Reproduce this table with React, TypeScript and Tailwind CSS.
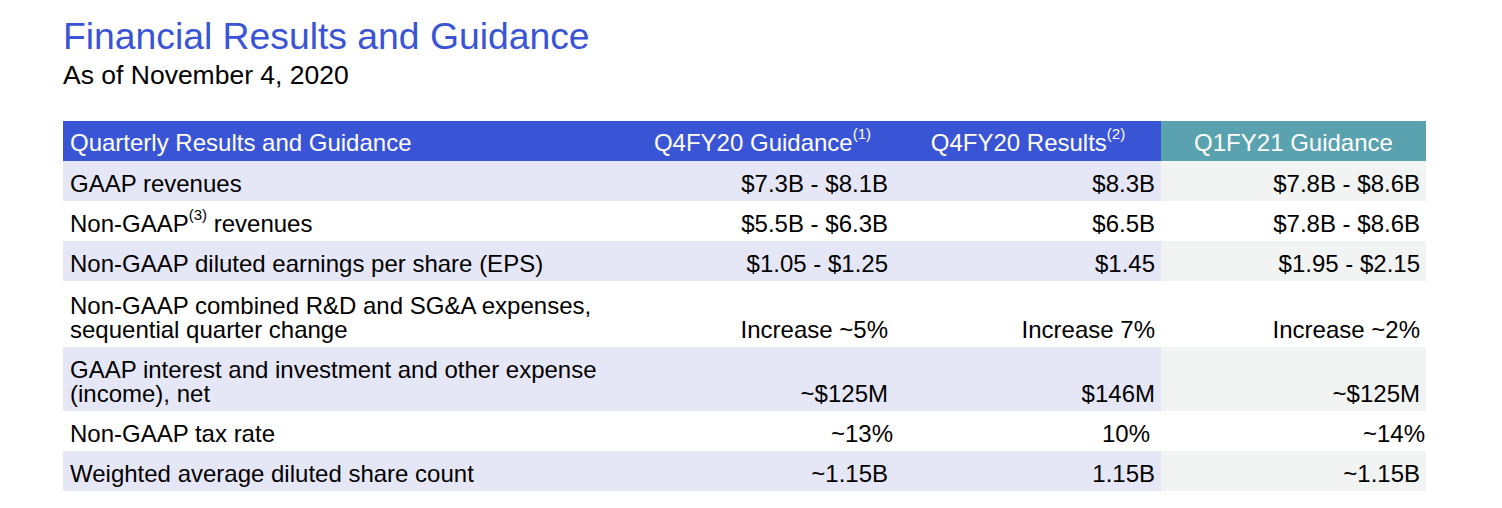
import React from "react";

type Row = {
  label: React.ReactNode;
  vals: [string, string, string];
  h: string;
  shade: boolean;
  pr?: [string, string, string];
};

const Sup = ({ n }: { n: string }) => (
  <sup className="text-[15px] relative top-[-3px] align-super leading-none">({n})</sup>
);

const rows: Row[] = [
  { label: "GAAP revenues", vals: ["$7.3B - $8.1B", "$8.3B", "$7.8B - $8.6B"], h: "h-[40px]", shade: true },
  {
    label: (
      <>
        Non-GAAP<Sup n="3" /> revenues
      </>
    ),
    vals: ["$5.5B - $6.3B", "$6.5B", "$7.8B - $8.6B"],
    h: "h-[40px]",
    shade: false,
  },
  { label: "Non-GAAP diluted earnings per share (EPS)", vals: ["$1.05 - $1.25", "$1.45", "$1.95 - $2.15"], h: "h-[40px]", shade: true },
  {
    label: (
      <>
        Non-GAAP combined R&amp;D and SG&amp;A expenses,
        <br />
        sequential quarter change
      </>
    ),
    vals: ["Increase ~5%", "Increase 7%", "Increase ~2%"],
    h: "h-[66px]",
    shade: false,
  },
  {
    label: (
      <>
        GAAP interest and investment and other expense
        <br />
        (income), net
      </>
    ),
    vals: ["~$125M", "$146M", "~$125M"],
    h: "h-[64px]",
    shade: true,
  },
  {
    label: "Non-GAAP tax rate",
    vals: ["~13%", "10%", "~14%"],
    h: "h-[40px]",
    shade: false,
    pr: ["pr-[2px]", "pr-[11px]", "pr-[1px]"],
  },
  { label: "Weighted average diluted share count", vals: ["~1.15B", "1.15B", "~1.15B"], h: "h-[40px]", shade: true },
];

export default function App() {
  return (
    <div
      className="w-[1502px] h-[508px] bg-white text-black"
      style={{ fontFamily: '"Liberation Sans", Arial, sans-serif' }}
    >
      <div className="pl-[63px] pt-[15px]">
        <h1 className="text-[37.3px] leading-[42px] text-[#3a54d6]">Financial Results and Guidance</h1>
        <div className="text-[26.5px] leading-[30px] mt-[3px]">As of November 4, 2020</div>
      </div>
      <div className="ml-[63px] mt-[31px] w-[1363px] text-[24px] leading-[24px]">
        <div className="flex h-[40px] text-white">
          <div className="w-[567px] bg-[#3a54d6] flex items-end pb-[6px] pl-[7px]">Quarterly Results and Guidance</div>
          <div className="w-[265px] bg-[#3a54d6] flex items-end justify-center pb-[6px]">
            <span>
              Q4FY20 Guidance<Sup n="1" />
            </span>
          </div>
          <div className="w-[266px] bg-[#3a54d6] flex items-end justify-center pb-[6px]">
            <span>
              Q4FY20 Results<Sup n="2" />
            </span>
          </div>
          <div className="w-[265px] bg-[#5aa2b0] flex items-end justify-center pb-[6px]">Q1FY21 Guidance</div>
        </div>
        {rows.map((r, i) => {
          const bg = r.shade ? "bg-[#e6e7f6]" : "bg-white";
          const bg4 = r.shade ? "bg-[#f1f4f3]" : "bg-white";
          const pr = r.pr ?? ["pr-[7px]", "pr-[6px]", "pr-[6px]"];
          return (
            <div key={i} className={`flex ${r.h}`}>
              <div className={`w-[567px] ${bg} flex items-end pb-[5px] pl-[7px]`}>
                <div>{r.label}</div>
              </div>
              <div className={`w-[265px] ${bg} flex items-end justify-end pb-[5px] ${pr[0]}`}>{r.vals[0]}</div>
              <div className={`w-[266px] ${bg} flex items-end justify-end pb-[5px] ${pr[1]}`}>{r.vals[1]}</div>
              <div className={`w-[265px] ${bg4} flex items-end justify-end pb-[5px] ${pr[2]}`}>{r.vals[2]}</div>
            </div>
          );
        })}
      </div>
    </div>
  );
}
